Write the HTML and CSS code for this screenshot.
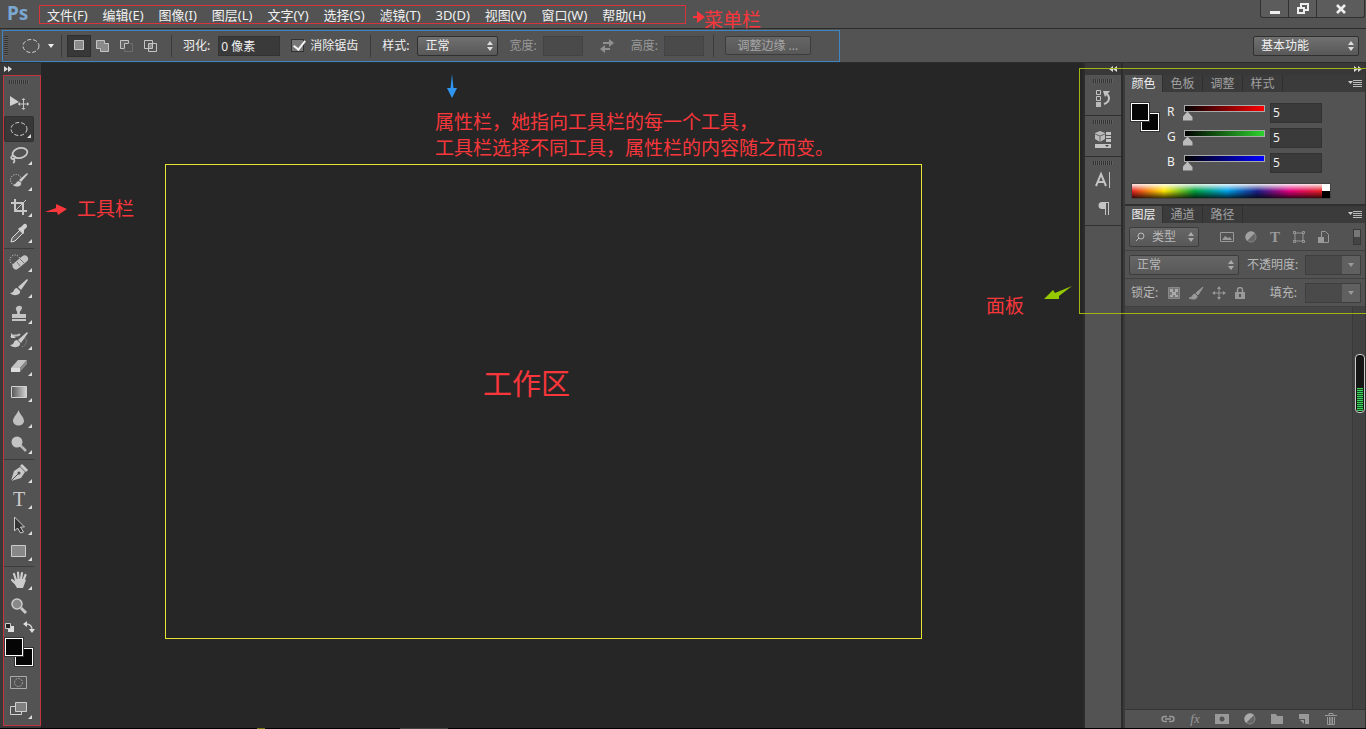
FILE: index.html
```html
<!DOCTYPE html>
<html lang="zh-CN">
<head>
<meta charset="utf-8">
<title>Photoshop</title>
<link rel="stylesheet" href="styles.css">
</head>
<body>
<div class="app">
  <header class="menubar">
    <span class="logo">Ps</span>
    <nav class="menu" aria-label="菜单栏">
      <button>文件(F)</button><button>编辑(E)</button><button>图像(I)</button><button>图层(L)</button><button>文字(Y)</button><button>选择(S)</button><button>滤镜(T)</button><button>3D(D)</button><button>视图(V)</button><button>窗口(W)</button><button>帮助(H)</button>
    </nav>
    <div class="window-controls">
      <button aria-label="最小化"><svg width="12" height="12"><path d="M1 9.500h10" stroke="#eee" stroke-width="3"/></svg></button>
      <button aria-label="还原"><svg width="14" height="12" fill="none" stroke="#eee" stroke-width="2"><path d="M5 4V1h7v6H9M2 5h6v5H2z"/></svg></button>
      <button aria-label="关闭" class="close"><svg width="12" height="12"><path d="M2 2l8 8M10 2l-8 8" stroke="#eee" stroke-width="2.600"/></svg></button>
    </div>
  </header>

  <div class="options">
    <div class="options-group">
      <span class="grip-v"></span>
      <button class="preset" aria-label="工具预设">
        <svg width="18" height="16" fill="none" stroke="#d2d2d2"><ellipse cx="9" cy="8" rx="8" ry="6.500" stroke-dasharray="4 2"/></svg>
        <svg width="6" height="4" fill="#eee"><path d="M0 0h6L3 4z"/></svg>
      </button>
      <span class="rule"></span>
      <div class="modes">
        <button class="on" aria-label="新选区"><svg width="16" height="16"><path d="M3.500 2.500h9v9h-9z" fill="#8a8a8a" stroke="#c4c4c4"/></svg></button>
        <button aria-label="添加到选区"><svg width="16" height="16"><path d="M1.500 2.500h8v3h4v8h-8v-3h-4z" fill="#8a8a8a" stroke="#c4c4c4"/></svg></button>
        <button aria-label="从选区减去"><svg width="16" height="16" fill="none"><path d="M1.500 2.500h8v3h-4v5h-4z" fill="#666" stroke="#c4c4c4"/><path d="M9.500 5.500h4v8h-8v-3" stroke="#6e6e6e"/></svg></button>
        <button aria-label="与选区交叉"><svg width="16" height="16" fill="none" stroke="#c4c4c4"><path d="M1.500 2.500h8v8h-8zM5.500 5.500h8v8h-8z"/><path d="M6 6h3v4H6z" fill="#888" stroke="none"/></svg></button>
      </div>
      <span class="rule"></span>
      <div class="field"><label for="feather">羽化:</label><input id="feather" class="text" type="text" value="0 像素"></div>
      <div class="check"><input id="aa" type="checkbox" checked><label for="aa">消除锯齿</label></div>
      <span class="rule"></span>
      <div class="field"><label for="style">样式:</label><span class="select"><select id="style"><option>正常</option></select></span></div>
      <div class="field dim size"><label for="w">宽度:</label><input id="w" class="text" type="text" disabled></div>
      <button class="swap" aria-label="互换" disabled><svg width="16" height="14" fill="none" stroke="#909090" stroke-width="2"><path d="M4 4h7M4 10h7"/><path d="M10 0l5 4-5 4zM6 6l-5 4 5 4z" fill="#909090" stroke="none"/></svg></button>
      <div class="field dim size last"><label for="h">高度:</label><input id="h" class="text" type="text" disabled></div>
      <span class="rule"></span>
      <button class="refine" disabled>调整边缘 ...</button>
    </div>
    <span class="select workspace-select"><select aria-label="工作区"><option>基本功能</option></select></span>
  </div>

  <div class="body">
    <aside class="toolcol">
      <button class="expand" aria-label="展开工具栏"><svg width="8" height="6" fill="#ddd"><path d="M0 0l4 3-4 3zM4 0l4 3-4 3z"/></svg></button>
      <div class="toolbar">
        <span class="grip"></span>
        <button class="tool solo" aria-label="移动"><svg width="20" height="20"><path d="M1 3l9 6-9 4z" fill="#d0d0d0"/><path d="M14.500 6v10M9.500 11h10" stroke="#c8c8c8"/><path d="M14.500 5l2 2h-4zM14.500 17l2-2h-4zM9 11l2-2v4zM20 11l-2-2v4z" fill="#c8c8c8"/></svg></button>
        <button class="tool on" aria-label="椭圆选框"><svg width="20" height="20" fill="none" stroke="#d0d0d0"><ellipse cx="10" cy="10" rx="8" ry="6.500" stroke-dasharray="4 2"/></svg></button>
        <button class="tool" aria-label="套索"><svg width="20" height="20" fill="none" stroke="#c8c8c8" stroke-width="1.800"><ellipse cx="11" cy="8" rx="7.500" ry="5" transform="rotate(-14 11 8)"/><path d="M5 11c-3-1-4 3-1 3 2 0 3-2 1-3M4 14c2 1 2 3 0 4"/></svg></button>
        <button class="tool" aria-label="快速选择"><svg width="20" height="20"><circle cx="7" cy="9" r="5.500" fill="none" stroke="#ddd" stroke-dasharray="1 1.500"/><path d="M19 3l-1-1-8 7 2 2zM10 10c-3 0-2 3-6 4 4 3 9 1 8-2z" fill="#ccc"/></svg></button>
        <button class="tool" aria-label="裁剪"><svg width="20" height="20" fill="none" stroke="#c8c8c8" stroke-width="2"><path d="M6 2v12h12M2 6h12v12"/><path d="M7 13L17 3" stroke-width="1"/></svg></button>
        <button class="tool" aria-label="吸管"><svg width="20" height="20"><path d="M11 7l3 3-8 8-4 1 1-4z" fill="#666" stroke="#ddd"/><path d="M10 5l2-1 3-3q3-1 3 3l-3 3v3l-1 1-5-5z" fill="#d0d0d0"/></svg></button>
        <hr>
        <button class="tool" aria-label="污点修复"><svg width="20" height="20"><circle cx="6" cy="8" r="5" fill="none" stroke="#ddd" stroke-dasharray="1 1.500"/><rect x="2" y="7" width="18" height="7" rx="3.500" transform="rotate(-40 11 10)" fill="#c4c4c4"/><path d="M8 10l3 4M11 7l4 4" stroke="#777"/></svg></button>
        <button class="tool" aria-label="画笔"><svg width="20" height="20"><path d="M19 2l-1-1-9 8 3 3zM8 10c-4 0-2 5-7 5 4 4 11 2 10-2z" fill="#ccc"/></svg></button>
        <button class="tool" aria-label="仿制图章"><svg width="20" height="20" fill="#c4c4c4"><path d="M8 10c1-3-2-4-1-6 1-3 6-3 6 0 0 2-3 3-2 6h6v4H3v-4zM3 15h14v2H3z"/></svg></button>
        <button class="tool" aria-label="历史记录画笔"><svg width="20" height="20"><path d="M2 7c3-4 5 1 9-3" fill="none" stroke="#bbb" stroke-width="2"/><path d="M2 3v5h5zM19 3l-1-1-9 8 3 3zM8 10c-4 0-2 5-7 5 4 4 11 2 10-2z" fill="#ccc"/><path d="M16 8c3 3 1 7-3 9" fill="none" stroke="#999" stroke-dasharray="1 1"/></svg></button>
        <button class="tool" aria-label="橡皮擦"><svg width="20" height="20"><path d="M9 4h9l-7 8H2z" fill="#c4c4c4"/><path d="M2 12h9v4H2z" fill="#ddd"/><path d="M11 12l7-8v4l-7 8z" fill="#888"/></svg></button>
        <button class="tool" aria-label="渐变"><svg width="20" height="20"><defs><linearGradient id="gr"><stop stop-color="#555"/><stop offset="1" stop-color="#d4d4d4"/></linearGradient></defs><path d="M2.500 4.500h15v11h-15z" fill="url(#gr)" stroke="#d0d0d0"/></svg></button>
        <button class="tool" aria-label="模糊"><svg width="20" height="20"><path d="M9.500 2c1 4 5.500 7 5.500 11a5.500 4.500 0 0 1-11 0c0-4 4.500-7 5.500-11z" fill="#c0c0c0"/></svg></button>
        <button class="tool" aria-label="减淡"><svg width="20" height="20"><path d="M10 10l7 7" stroke="#b8b8b8" stroke-width="2.500"/><circle cx="8" cy="8" r="5.500" fill="#c4c4c4"/></svg></button>
        <hr>
        <button class="tool" aria-label="钢笔"><svg width="20" height="20"><path d="M2 18l3-10 6-4 5 5-4 6z" fill="#c8c8c8"/><path d="M12 2l6 6" stroke="#ccc" stroke-width="3"/><path d="M2 18l7-7" stroke="#505050"/><circle cx="10" cy="10" r="1.500" fill="#505050"/></svg></button>
        <button class="tool type" aria-label="横排文字">T</button>
        <button class="tool" aria-label="路径选择"><svg width="20" height="20"><path d="M5.500 2v14l3-3 3 5 3-1-3-5h4z" fill="#333" stroke="#ccc"/></svg></button>
        <button class="tool" aria-label="矩形"><svg width="20" height="20"><path d="M2.500 4.500h14v11h-14z" fill="#888" stroke="#ccc"/></svg></button>
        <hr>
        <button class="tool" aria-label="抓手"><svg width="20" height="20" fill="none" stroke="#ccc" stroke-width="2.200" stroke-linecap="round"><path d="M7 10L5 4M9.500 9L9 2.500M12 9l1-6M14.500 10l2-5M6 13l-3-3"/><path d="M6 9h9l2 1-3 8H8l-3-5z" fill="#ccc" stroke="none"/></svg></button>
        <button class="tool solo" aria-label="缩放"><svg width="20" height="20"><path d="M12 12l5 5" stroke="#c8c8c8" stroke-width="3"/><circle cx="8" cy="8" r="5" fill="#888" stroke="#ccc" stroke-width="1.500"/></svg></button>
        <div class="mini">
          <button aria-label="默认颜色"><svg width="11" height="11"><path d="M4 4h6v6H4z" fill="#ddd"/><path d="M1.500 1.500h5v5h-5z" fill="#222" stroke="#ccc"/></svg></button>
          <button aria-label="切换颜色"><svg width="12" height="12"><path d="M3 3q6 0 6 6" fill="none" stroke="#ccc" stroke-width="1.500"/><path d="M0 3l4-3v6zM6 8h6l-3 4z" fill="#ddd"/></svg></button>
        </div>
        <div class="swatches"><button class="back" aria-label="背景色"></button><button class="front" aria-label="前景色"></button></div>
        <button class="tool solo" aria-label="快速蒙版"><svg width="20" height="20" fill="none" stroke="#aaa"><path d="M1.500 3.500h16v12h-16z"/><circle cx="9.500" cy="9.500" r="4" stroke-dasharray="2 1"/></svg></button>
        <button class="tool screen" aria-label="屏幕模式"><svg width="20" height="20" stroke="#d0d0d0"><path d="M1.500 7.500h11v8h-11z" fill="#555"/><path d="M6.500 3.500h11v9h-11z" fill="#808080"/></svg></button>
      </div>
    </aside>

    <main class="canvas"><div class="work-area"><strong>工作区</strong></div></main>

    <aside class="dock">
      <button class="expand" aria-label="展开面板"><svg width="8" height="6" fill="#ddd"><path d="M4 0L0 3l4 3zM8 0L4 3l4 3z"/></svg></button>
      <div class="dock-group"><span class="grip"></span><button aria-label="历史记录"><svg width="18" height="20"><path d="M2.500 2.500h4v4h-4zM2.500 8.500h4v4h-4z" fill="none" stroke="#c4c4c4"/><path d="M2 14h5v5H2z" fill="#bbb"/><path d="M10 16c6-2 6-7 3-10" fill="none" stroke="#c4c4c4" stroke-width="2"/><path d="M9 3h7l-5 6z" fill="#c4c4c4"/></svg></button></div>
      <div class="dock-group"><span class="grip"></span><button aria-label="属性"><svg width="18" height="20"><path d="M6 2l5 2v6l-5 3-5-3V4z" fill="#bbb"/><path d="M1 5l5 2 5-2M6 7v6" stroke="#666" fill="none"/><path d="M12 3h5v3h-5zM12 7h5v2h-5zM12 10h5v3h-5zM1 15h16v4H1z" fill="#c4c4c4"/><path d="M11 16h4l-2 2z" fill="#444"/></svg></button></div>
      <div class="dock-group"><span class="grip"></span><button aria-label="字符"><svg width="18" height="20" fill="none" stroke="#c4c4c4"><path d="M2 16L7 4l5 12M4 12h6" stroke-width="2"/><path d="M15.500 2v16"/></svg></button><button aria-label="段落"><svg width="18" height="20"><path d="M9 3h6v13h-1V4h-2v12h-1v-6H8a3 3 0 0 1 0-7z" fill="#c4c4c4"/></svg></button></div>
    </aside>

    <aside class="panels">
      <button class="expand" aria-label="折叠面板"><svg width="8" height="6" fill="#ddd"><path d="M0 0l4 3-4 3zM4 0l4 3-4 3z"/></svg></button>
      <section class="panel">
        <div class="tabs"><button class="on">颜色</button><button>色板</button><button>调整</button><button>样式</button>
          <button class="flyout" aria-label="面板菜单"><svg width="14" height="9"><path d="M0 2h5L2.500 5z" fill="#ccc"/><path d="M5 1.500h9M5 3.500h9M5 5.500h9M5 7.500h9" stroke="#bbb"/></svg></button></div>
        <div class="color-body">
          <div class="swatches"><button class="back" aria-label="背景色"></button><button class="front" aria-label="前景色"></button></div>
          <div class="channels">
            <div class="channel"><label for="r">R</label><input class="red" id="r" type="range" max="255" value="5"><input class="text" type="text" value="5" aria-label="R 值"></div>
            <div class="channel"><label for="g">G</label><input class="green" id="g" type="range" max="255" value="5"><input class="text" type="text" value="5" aria-label="G 值"></div>
            <div class="channel"><label for="b">B</label><input class="blue" id="b" type="range" max="255" value="5"><input class="text" type="text" value="5" aria-label="B 值"></div>
          </div>
        </div>
        <div class="ramp"><span class="spectrum"></span><span class="bw"></span></div>
      </section>
      <section class="panel layers">
        <div class="tabs"><button class="on">图层</button><button>通道</button><button>路径</button>
          <button class="flyout" aria-label="面板菜单"><svg width="14" height="9"><path d="M0 2h5L2.500 5z" fill="#ccc"/><path d="M5 1.500h9M5 3.500h9M5 5.500h9M5 7.500h9" stroke="#bbb"/></svg></button></div>
        <div class="row filter">
          <span class="select kind"><svg class="lens" width="10" height="10" fill="none" stroke="#bbb"><circle cx="6" cy="4" r="3"/><path d="M4 6L1 9"/></svg><select aria-label="类型"><option>类型</option></select></span>
          <div class="filters">
            <button aria-label="像素"><svg width="14" height="14"><path d="M.500 2.500h13v9H.500z" fill="none" stroke="#999"/><path d="M2 10l3-4 3 2 2-1 2 3z" fill="#999"/></svg></button>
            <button aria-label="调整"><svg width="14" height="14"><circle cx="7" cy="7" r="5" fill="#666" stroke="#888"/><path d="M3 11A5.500 5.500 0 0 1 11 3z" fill="#a0a0a0"/></svg></button>
            <button class="t" aria-label="文字">T</button>
            <button aria-label="形状"><svg width="14" height="14" fill="none" stroke="#999"><path d="M3 3h8v8H3z"/><path d="M1.500 1.500h2v2h-2zM10.500 1.500h2v2h-2zM1.500 10.500h2v2h-2zM10.500 10.500h2v2h-2z"/></svg></button>
            <button aria-label="智能对象"><svg width="14" height="14"><path d="M5.500 1.500h4l3 3v8h-7z" fill="none" stroke="#999"/><path d="M2 7h6v6H2z" fill="#999"/></svg></button>
          </div>
          <button class="toggle" aria-label="过滤开关"></button>
        </div>
        <div class="row"><span class="select blend"><select aria-label="混合模式"><option>正常</option></select></span><label for="op">不透明度:</label><span class="combo"><input id="op" type="text"><button aria-label="不透明度滑块"><svg width="6" height="4" fill="#999"><path d="M0 0h6L3 4z"/></svg></button></span></div>
        <div class="row locks"><span>锁定:</span>
          <button aria-label="锁定透明像素"><svg width="12" height="12"><path d="M.500.500h11v11H.500z" fill="#777" stroke="#888"/><path d="M2 2h3v3H2zM7 2h3v3H7zM4 5h4v3H4zM2 8h3v2H2zM7 8h3v2H7z" fill="#aaa"/></svg></button>
          <button aria-label="锁定图像像素"><svg width="16" height="14"><path d="M15 1l-7 6 2 2zM7 8c-3 0-2 4-6 4 4 2 9 1 8-2z" fill="#999" stroke="#999"/></svg></button>
          <button aria-label="锁定位置"><svg width="14" height="14"><path d="M7 2v10M2 7h10" stroke="#999"/><path d="M7 0l2 3H5zM7 14l2-3H5zM0 7l3-2v4zM14 7l-3-2v4z" fill="#999"/></svg></button>
          <button aria-label="锁定全部"><svg width="12" height="12"><path d="M3.500 6V3a2.500 2.500 0 0 1 5 0v3" fill="none" stroke="#999" stroke-width="1.500"/><path d="M1 5h10v7H1zM5 7v3h2V7z" fill="#999" fill-rule="evenodd"/></svg></button>
          <label for="fill">填充:</label><span class="combo"><input id="fill" type="text"><button aria-label="填充滑块"><svg width="6" height="4" fill="#999"><path d="M0 0h6L3 4z"/></svg></button></span></div>
        <div class="layer-list"><span class="scroll"></span></div>
        <footer>
          <button aria-label="链接图层"><svg width="14" height="12" fill="none" stroke="#999" stroke-width="1.500"><path d="M6 8.500H3.500a2.500 2.500 0 0 1 0-5H6M8 3.500h2.500a2.500 2.500 0 0 1 0 5H8M4 6h6"/></svg></button>
          <button class="fx" aria-label="图层样式">fx</button>
          <button aria-label="图层蒙版"><svg width="14" height="12"><path d="M0 1h14v10H0zM7 3.500a2.500 2.500 0 1 0 .1 0z" fill="#999" fill-rule="evenodd"/></svg></button>
          <button aria-label="调整图层"><svg width="12" height="12"><circle cx="6" cy="6" r="5" fill="#666" stroke="#888"/><path d="M2 10A5.500 5.500 0 0 1 10 2z" fill="#aaa"/></svg></button>
          <button aria-label="新建组"><svg width="12" height="12"><path d="M0 1h5l1 2h6v8H0z" fill="#999"/></svg></button>
          <button aria-label="新建图层"><svg width="12" height="12"><path d="M1 1h10v10H7V6H1z" fill="#999"/><path d="M2 7h4v4z" fill="#999"/></svg></button>
          <button aria-label="删除图层"><svg width="12" height="12" fill="none" stroke="#999"><path d="M0 2.500h12M4 2V.500h4V2M2.500 4v7.500h7V4M4.500 4v7M6 4v7M7.500 4v7"/></svg></button>
        </footer>
      </section>
    </aside>

    <div class="panel-frame"></div>
    <div class="meter"><span></span></div>
    <p class="note note-options">属性栏，她指向工具栏的每一个工具，<br>工具栏选择不同工具，属性栏的内容随之而变。</p>
    <svg class="arrow arrow-options" width="10" height="24" fill="#2e96f0"><path d="M5 0l1.500 14H10L5 24 0 14h3.500z"/></svg>
    <p class="note note-tools">工具栏</p>
    <svg class="arrow arrow-tools" width="22" height="12" fill="#f8363b"><path d="M0 8l11-4V0l11 5-9 6-1-3z"/></svg>
    <p class="note note-panels">面板</p>
    <svg class="arrow arrow-panels" width="28" height="14" fill="#96c800"><path d="M28 0L15 10v3L0 13 9 4l2 3z"/></svg>
  </div>
  <div class="taskbar"><span class="spot"></span><span class="segment"></span></div>
  <p class="note note-menu">菜单栏</p>
  <svg class="arrow arrow-menu" width="12" height="12" fill="#f8363b"><path d="M0 5h4V0l8 6-8 6V7H0z"/></svg>
</div>
</body>
</html>
```

FILE: styles.css
```css
* { box-sizing: border-box; }
body {
  margin: 0;
  background: #262626;
  color: #f0f0f0;
  font: 12px/16px "Noto Sans", "Noto Sans CJK SC", sans-serif;
}
button, input, select { font: inherit; color: inherit; margin: 0; }
button { background: none; border: 0; padding: 0; display: flex; align-items: center; justify-content: center; }
svg { display: block; flex: none; }
p, hr { margin: 0; }

.app { position: relative; display: flex; flex-direction: column; height: 100vh; overflow: hidden; }

/* Menu bar */
.menubar { flex: none; display: flex; align-items: flex-start; height: 29px; background: #535353; border-bottom: 1px solid #2c2c2c; }
.logo { width: 39px; padding-left: 7px; font-size: 19px; line-height: 26px; font-weight: 700; color: #7ba7d3; }
.menu { display: flex; gap: 15px; margin-top: 5px; height: 19px; padding: 0 39px 0 7px; border: 1px solid #d8323c; font-size: 13px; white-space: nowrap; }
.window-controls { display: flex; margin-left: auto; margin-right: 1px; border: 1px solid #303030; border-top: 0; border-radius: 0 0 3px 3px; background: #5c5c5c; }
.window-controls button { width: 28px; height: 17px; border-right: 1px solid #303030; }
.window-controls .close { width: 47px; border-right: 0; }

/* Options bar */
.options { flex: none; display: flex; align-items: center; height: 34px; background: #535353; border-bottom: 1px solid #2c2c2c; padding: 0 7px 0 2px; }
.options-group { display: flex; align-items: center; height: 32px; padding-right: 28px; border: 1px solid #3d85c4; white-space: nowrap; }
.grip-v { width: 4px; height: 20px; margin-left: 1px; background: repeating-linear-gradient(#333 0 1px, #606060 1px 2px); }
.preset { width: 53px; gap: 8px; padding-left: 7px; }
.rule { width: 1px; height: 22px; background: #3a3a3a; }
.modes { display: flex; padding: 0 8px 0 5px; }
.modes button { width: 24px; height: 22px; }
.modes .on { background: #383838; border: 1px solid #2e2e2e; }
.field { display: flex; align-items: center; gap: 8px; padding-left: 11px; }
.text { width: 62px; height: 20px; padding: 0 2px; background: #3a3a3a; border: 1px solid #333; outline: 0; }
.check { display: flex; align-items: center; gap: 6px; padding: 0 12px 0 11px; }
.check input { appearance: none; width: 13px; height: 13px; background: #777; border: 1px solid #333; position: relative; }
.check input:checked::after { content: ""; position: absolute; left: 4px; top: -2px; width: 5px; height: 10px; border: solid #f4f4f4; border-width: 0 2px 2px 0; transform: rotate(38deg); }
.dim { color: #999; }
.size { gap: 6px; }
.size .text { width: 40px; background: #4a4a4a; border-color: #434343; }
.swap { width: 48px; }
.last { padding: 0 9px 0 0; }
.refine { width: 86px; height: 19px; margin-left: 11px; border: 1px solid #3c3c3c; border-radius: 2px; background: linear-gradient(#656565, #585858); color: #a6a6a6; }
.select { position: relative; display: inline-flex; width: 81px; height: 20px; border: 1px solid #303030; border-radius: 2px; background: linear-gradient(#707070, #585858); }
.select select { appearance: none; width: 100%; height: 100%; padding: 0 16px 0 7px; border: 0; background: none; outline: 0; }
.select::before, .select::after { content: ""; position: absolute; right: 4px; border: 3px solid transparent; pointer-events: none; }
.select::before { top: 1px; border-bottom: 4px solid #ddd; }
.select::after { bottom: 1px; border-top: 4px solid #ddd; }
.workspace-select { width: 106px; margin-left: auto; }

/* Main area */
.body { position: relative; flex: 1; min-height: 0; display: flex; }
.expand { flex: none; height: 12px; }
.grip { flex: none; width: 20px; height: 4px; background: repeating-linear-gradient(90deg, #333 0 1px, #606060 1px 2px); }
.toolcol { flex: none; display: flex; flex-direction: column; width: 41px; background: #383838; }
.toolcol .expand { width: 16px; }
.toolbar { flex: 1; margin: 0 0 2px 3px; padding: 4px 6px 0 0; border: 1px solid #c23540; background: #535353; display: flex; flex-direction: column; align-items: center; }
.toolbar hr { width: 100%; height: 3px; border: solid #3c3c3c; border-width: 0 0 1px; flex: none; }
.toolbar .grip { margin-bottom: 6px; }
.tool { position: relative; flex: none; width: 30px; height: 26px; }
.tool.on { background: #383838; border: 1px solid #303030; border-radius: 2px; }
.tool:not(.solo)::after { content: ""; position: absolute; right: 2px; bottom: 3px; border: solid transparent; border-width: 0 0 4px 4px; border-bottom-color: #ddd; }
.type { font: 20px/24px "Liberation Serif", serif; color: #ccc; }
.mini { display: flex; gap: 8px; height: 16px; }
.swatches { position: relative; flex: none; width: 28px; height: 28px; margin: 3px 0 4px; }
.swatches button { position: absolute; width: 18px; height: 18px; background: #050505; border: 1px solid #fff; outline: 1px solid #333; }
.front { left: 0; top: 0; }
.back { right: 0; bottom: 0; }

.canvas { flex: 1; display: flex; padding: 101px 161px 89px 124px; }
.work-area { flex: 1; border: 1px solid #e6e632; padding: 198px 34px 0 0; text-align: center; }
.work-area strong { font-size: 29px; line-height: 42px; font-weight: 400; color: #f8363b; }

.dock { flex: none; width: 40px; display: flex; flex-direction: column; border: solid #2c2c2c; border-width: 0 2px; background: #535353; }
.dock .expand { background: #383838; justify-content: flex-end; padding-right: 4px; }
.dock-group { display: flex; flex-direction: column; align-items: center; padding: 4px 0 2px; border-bottom: 1px solid #303030; }
.dock-group button { width: 28px; height: 30px; }
.dock-group button + button { height: 28px; }

.panels { flex: none; width: 243px; display: flex; flex-direction: column; background: #535353; border-left: 2px solid #3a3a3a; border-right: 1px solid #333; }
.panels .expand { background: #383838; justify-content: flex-end; padding-right: 3px; }
.tabs { display: flex; height: 17px; background: #3b3b3b; }
.tabs button { width: 40px; border-right: 1px solid #303030; color: #a0a0a0; }
.tabs .on { width: 38px; background: #535353; color: #f0f0f0; }
.tabs .flyout { width: 14px; margin: 0 3px 0 auto; border: 0; }
.color-body { display: flex; gap: 8px; padding: 8px 0 0 6px; }
.channels { flex: 1; }
.channel { display: flex; align-items: center; height: 25px; }
.channel label { width: 14px; height: 18px; }
.channel [type="range"] { appearance: none; width: 87px; height: 18px; outline: 0; background: linear-gradient(90deg, #000, var(--c)) 4px 2px / calc(100% - 8px) 5px no-repeat, linear-gradient(#aaa, #aaa) 3px 1px / calc(100% - 6px) 7px no-repeat; }
.channel [type="range"]::-webkit-slider-thumb { appearance: none; width: 10px; height: 9px; margin-top: 7px; background: #bcbcbc; clip-path: polygon(50% 0, 100% 60%, 100% 100%, 0 100%, 0 60%); }
.red { --c: #f00; }
.green { --c: #2dd22d; }
.blue { --c: #00f; }
.channel .text { width: 52px; margin-left: 2px; }
.ramp { display: flex; width: 200px; height: 16px; margin: 8px 0 5px 6px; border: 1px solid #444; }
.spectrum { flex: 1; background: linear-gradient(rgba(255,255,255,.9), transparent 50%, rgba(0,0,0,.75)), linear-gradient(90deg, #e62222, #ffe600 17%, #00a03c 33%, #00a0e6 50%, #1c2088 66%, #e4007f 83%, #e62222); }
.bw { width: 8px; background: linear-gradient(#fff 50%, #000 50%); }

.layers { flex: 1; min-height: 0; display: flex; flex-direction: column; border-top: 2px solid #303030; }
.row { flex: none; display: flex; align-items: center; height: 28px; padding: 0 4px 0 4px; border-bottom: 1px solid #404040; color: #b8b8b8; }
.row .select { background: linear-gradient(#666, #585858); border-color: #3c3c3c; }
.row .select::before { border-bottom-color: #aaa; }
.row .select::after { border-top-color: #aaa; }
.kind { width: 70px; align-items: center; padding-left: 5px; }
.filters { display: flex; gap: 10px; margin-left: 21px; }
.filters button { width: 14px; }
.filters .t { font: 700 15px/18px "Liberation Serif", serif; color: #999; }
.toggle { width: 8px; height: 16px; margin-left: auto; border: 1px solid #383838; background: linear-gradient(#777 50%, #444 50%); }
.blend { width: 110px; margin-right: 8px; }
.combo { display: flex; width: 56px; height: 20px; margin-left: auto; border: 1px solid #3e3e3e; }
.combo input { width: 36px; border: 0; background: #4a4a4a; }
.combo button { flex: 1; background: #606060; }
.locks { padding-left: 6px; gap: 8px; }
.locks span + button { margin-left: 2px; }
.locks label { margin-left: auto; }
.locks .combo { margin: 0; }
.layer-list { flex: 1; display: flex; justify-content: flex-end; background: #464646; }
.scroll { width: 13px; background: #424242; border-left: 1px solid #383838; }
.layers footer { display: flex; justify-content: center; gap: 15px; height: 19px; padding-left: 8px; border-top: 1px solid #363636; }
.fx { font: italic 13px/16px "Liberation Serif", serif; color: #999; }

/* Annotations lying over the interface */
.note, .arrow, .panel-frame, .meter { position: absolute; pointer-events: none; }
.note { color: #f8363b; font-size: 19px; line-height: 26px; white-space: nowrap; }
.note-menu { left: 704px; top: 7px; }
.arrow-menu { left: 693px; top: 11px; }
.note-options { left: 435px; top: 46px; }
.arrow-options { left: 447px; top: 11px; }
.note-tools { left: 77px; top: 133px; }
.arrow-tools { left: 45px; top: 141px; }
.note-panels { right: 342px; top: 230px; }
.arrow-panels { right: 294px; top: 223px; }
.panel-frame { right: 0; top: 5px; width: 287px; height: 246px; border: 1px solid #a0b414; border-right: 0; }
.meter { right: 1px; top: 291px; width: 10px; height: 59px; border: 1px solid #ccc; border-radius: 4px; background: #161616; display: flex; align-items: flex-end; padding: 1px; }
.meter span { flex: 1; height: 23px; background: repeating-linear-gradient(#3fd35f 0 1px, #145022 1px 2px); }

.taskbar { flex: none; display: flex; height: 1px; background: #000; }
.spot { width: 8px; margin-left: 257px; background: #78780a; }
.segment { width: 48px; margin-left: 135px; background: #444; }
```
